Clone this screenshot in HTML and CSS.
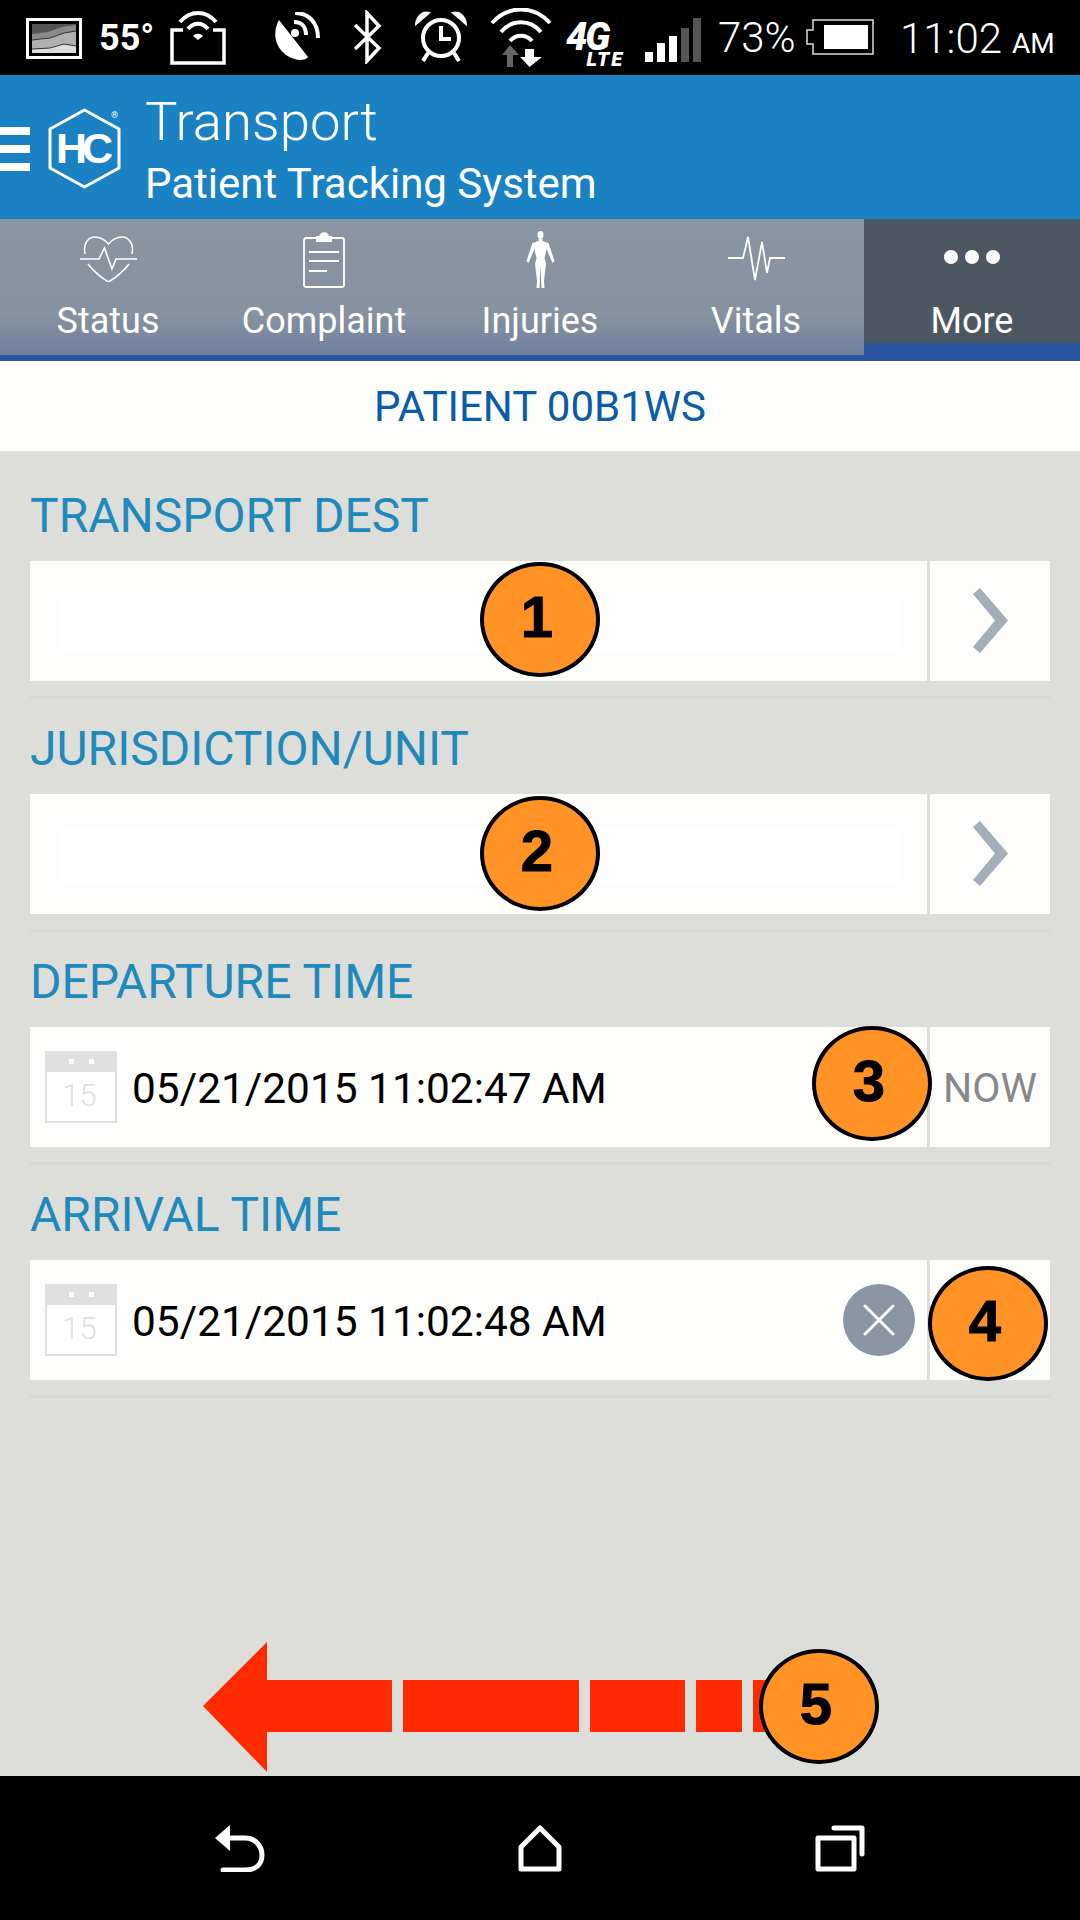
FILE: index.html
```html
<!DOCTYPE html>
<html lang="en">
<head>
  <meta charset="UTF-8" />
  <meta name="viewport" content="width=device-width, initial-scale=1" />
  <title>Transport - Patient Tracking System</title>
  <link rel="stylesheet" href="styles.css">
</head>
<body>
<div class="screen">

  <!-- status bar -->
  <div class="status-bar">
    <svg class="st-widget" width="56" height="41" viewBox="0 0 56 41">
      <rect x="1.5" y="1.5" width="53" height="38" fill="#000" stroke="#fff" stroke-width="3"/>
      <rect x="6" y="6" width="44" height="29" fill="#555"/>
      <path d="M6 16 L22 14 L36 9 L50 7 V35 H6Z" fill="#8a8a8a"/>
      <path d="M6 22 L24 20 L38 15 L50 13 V35 H6Z" fill="#b0b0b0"/>
      <path d="M6 31 L24 30 L38 26 L50 28 V35 H6Z" fill="#ddd"/>
      <path d="M6 22 L24 20 L38 15 L50 13 M6 31 L24 30 L38 26 L50 28" fill="none" stroke="#333"/>
    </svg>
    <span class="st-temp">55°</span>
    <svg class="st-hotspot" width="58" height="55" viewBox="0 0 58 55">
      <path d="M14 20 H3 V53 H55 V20 H44" fill="none" stroke="#fff" stroke-width="3.5"/>
      <path d="M11 12 C21 0 37 0 47 12" fill="none" stroke="#fff" stroke-width="4"/>
      <path d="M19 19 C25 12 33 12 39 19" fill="none" stroke="#fff" stroke-width="4"/>
      <path d="M24 26 C27 23 31 23 34 26 L29 30Z" fill="#fff"/>
    </svg>
    <svg class="st-dish" width="46" height="48" viewBox="0 0 46 48">
      <path d="M5 8 C-5 26 6 46 26 48 C30 48 33 47 34 45Z" fill="#fff"/>
      <circle cx="21" cy="21" r="4" fill="#fff"/>
      <path d="M20 10 C28 10 32 15 32 23" fill="none" stroke="#fff" stroke-width="4"/>
      <path d="M21 1 C35 1 44 11 44 26" fill="none" stroke="#fff" stroke-width="4"/>
    </svg>
    <svg class="st-bt" width="29" height="54" viewBox="0 0 29 54">
      <path d="M2 15 L26 38 L14 51 V3 L26 16 L2 39" fill="none" stroke="#fff" stroke-width="3.5"/>
    </svg>
    <svg class="st-alarm" width="52" height="51" viewBox="0 0 52 51">
      <circle cx="26" cy="27" r="18" fill="none" stroke="#fff" stroke-width="4"/>
      <path d="M26 15 V28 H36" fill="none" stroke="#fff" stroke-width="4"/>
      <path d="M1 13 C2 5 8 0 14 2Z M51 13 C50 5 44 0 38 2Z" fill="#fff" stroke="#fff" stroke-width="2"/>
      <path d="M13 42 L8 50 M39 42 L44 50" stroke="#fff" stroke-width="4"/>
    </svg>
    <svg class="st-wifi" width="62" height="59" viewBox="0 0 62 59">
      <path d="M2 15 C18 -3 44 -3 60 15" fill="none" stroke="#fff" stroke-width="4"/>
      <path d="M11 24 C22 11 40 11 51 24" fill="none" stroke="#fff" stroke-width="4"/>
      <path d="M20 33 C26 26 36 26 42 33" fill="none" stroke="#fff" stroke-width="4"/>
      <path d="M12 47 L20 37 L29 47 H23 V59 H17 V47Z" fill="#666"/>
      <path d="M33 42 H42 V50 H50 L37.500 60 L32 54 L28 50 H33Z" fill="#fff" transform="translate(2 -1)"/>
    </svg>
    <div class="st-lte">
      <span class="st-lte-4g">4G</span>
      <span class="st-lte-sub">LTE</span>
    </div>
    <svg class="st-signal" width="56" height="44" viewBox="0 0 56 44">
      <rect x="0" y="34" width="8" height="10" fill="#fff"/>
      <rect x="12" y="25" width="8" height="19" fill="#fff"/>
      <rect x="24" y="18" width="8" height="26" fill="#fff"/>
      <rect x="36" y="10" width="8" height="34" fill="#555"/>
      <rect x="48" y="0" width="8" height="44" fill="#555"/>
    </svg>
    <span class="st-batt-pct">73%</span>
    <svg class="st-battery" width="68" height="36" viewBox="0 0 68 36">
      <path d="M7 1 H67 V35 H7 V25 H1 V11 H7Z" fill="none" stroke="#ddd" stroke-width="1.500"/>
      <rect x="18" y="6" width="44" height="24" fill="#fff"/>
    </svg>
    <span class="st-time">11:02<small>AM</small></span>
  </div>

  <!-- app header -->
  <header class="app-header">
    <div class="menu-bars"><i></i><i></i><i></i></div>
    <div class="logo">
      <svg width="75" height="81" viewBox="0 0 75 81">
        <path d="M37.500 2 L72 21 V60 L37.500 79 L3 60 V21Z" fill="none" stroke="#fff" stroke-width="3" stroke-linejoin="round"/>
      </svg>
      <span class="logo-text">HC</span>
      <span class="logo-reg">®</span>
    </div>
    <div class="titles">
      <div class="title">Transport</div>
      <div class="subtitle">Patient Tracking System</div>
    </div>
  </header>

  <!-- tabs -->
  <nav class="tabs">
    <div class="tab">
      <div class="tab-icon">
        <svg width="57" height="46" viewBox="0 0 57 46" fill="none" stroke="#fff" stroke-width="1.600">
          <path d="M5 18 C3 8 8 1 15 1 C21 1 25 4 28.500 8 C32 4 36 1 42 1 C49 1 54 8 52 18"/>
          <path d="M0 23 H19 L24.500 12 L32 33 L36 23 H57"/>
          <path d="M8 28 C14 36 22 42 28.500 46 C35 42 43 36 49 28"/>
        </svg>
      </div>
      <span>Status</span>
    </div>
    <div class="tab">
      <div class="tab-icon">
        <svg width="42" height="57" viewBox="0 0 42 57" fill="none" stroke="#fff" stroke-width="1.800">
          <rect x="1" y="7" width="40" height="49" rx="2"/>
          <path d="M14 10 V6 H17 C17 1 25 1 25 6 H28 V10Z" fill="#fff"/>
          <path d="M6 21 H36 M6 30 H36 M6 40 H24" stroke-width="2"/>
        </svg>
      </div>
      <span>Complaint</span>
    </div>
    <div class="tab">
      <div class="tab-icon">
        <svg width="29" height="57" viewBox="0 0 29 57">
          <ellipse cx="14.500" cy="4" rx="3" ry="4" fill="#fff"/>
          <path d="M12.500 8 H16.500 V10 L22.500 12 L28.500 30 L26.500 32 L20.500 18 L19.500 23 L18.500 27 L20 33 L18 50 L18.500 57 H15.500 L14.500 34 L13.500 57 H10.500 L11 50 L9 33 L10.500 27 L9.500 23 L8.500 18 L2.500 32 L0.500 30 L6.500 12 L12.500 10Z" fill="#fff"/>
        </svg>
      </div>
      <span>Injuries</span>
    </div>
    <div class="tab">
      <div class="tab-icon">
        <svg width="57" height="46" viewBox="0 0 57 46" fill="none" stroke="#fff" stroke-width="1.800">
          <path d="M0 22 H15 L20 1 L27 44 L34 6 L39 37 L42 22 H57"/>
        </svg>
      </div>
      <span>Vitals</span>
    </div>
    <div class="tab tab-active">
      <div class="tab-icon">
        <div class="more-dots"><i></i><i></i><i></i></div>
      </div>
      <span>More</span>
    </div>
  </nav>

  <div class="patient-bar">PATIENT 00B1WS</div>

  <main class="content">
    <section class="group">
      <div class="group-label">TRANSPORT DEST</div>
      <div class="field">
        <div class="field-main"><div class="field-input"></div></div>
        <div class="field-side">
          <svg width="35" height="65" viewBox="0 0 35 65"><path d="M7 0 L35 32.500 L7 65 L0 59 L22 32.500 L0 6Z" fill="#a5adb9"/></svg>
        </div>
      </div>
    </section>

    <section class="group">
      <div class="group-label">JURISDICTION/UNIT</div>
      <div class="field">
        <div class="field-main"><div class="field-input"></div></div>
        <div class="field-side">
          <svg width="35" height="65" viewBox="0 0 35 65"><path d="M7 0 L35 32.500 L7 65 L0 59 L22 32.500 L0 6Z" fill="#a5adb9"/></svg>
        </div>
      </div>
    </section>

    <section class="group">
      <div class="group-label">DEPARTURE TIME</div>
      <div class="field">
        <div class="field-main">
          <div class="cal-icon"><div class="cal-top"><i></i><i></i></div><div class="cal-num">15</div></div>
          <span class="field-value">05/21/2015 11:02:47 AM</span>
        </div>
        <div class="field-side now-btn">NOW</div>
      </div>
    </section>

    <section class="group">
      <div class="group-label">ARRIVAL TIME</div>
      <div class="field">
        <div class="field-main">
          <div class="cal-icon"><div class="cal-top"><i></i><i></i></div><div class="cal-num">15</div></div>
          <span class="field-value">05/21/2015 11:02:48 AM</span>
          <div class="clear-btn">
            <svg width="32" height="32" viewBox="0 0 32 32"><path d="M2 2 L30 30 M30 2 L2 30" stroke="#fff" stroke-width="3" stroke-linecap="round"/></svg>
          </div>
        </div>
        <div class="field-side"></div>
      </div>
    </section>
  </main>

  <!-- android nav -->
  <div class="nav-bar">
    <svg width="50" height="47" viewBox="0 0 50 47" fill="none">
      <path d="M0 13 L15 0 V26Z" fill="#fff"/>
      <path d="M12 13 H30 C41 13 47 22 47 30 C47 39 41 45 30 45 H8" stroke="#fff" stroke-width="5" stroke-linecap="round"/>
    </svg>
    <svg width="44" height="47" viewBox="0 0 44 47" fill="none">
      <path d="M22 3 L41 22 V44 H3 V22Z" stroke="#fff" stroke-width="5" stroke-linejoin="round"/>
    </svg>
    <svg width="50" height="47" viewBox="0 0 50 47" fill="none">
      <rect x="3" y="13" width="36" height="31" stroke="#fff" stroke-width="5" stroke-linejoin="round"/>
      <path d="M19 3 H47 V29" stroke="#fff" stroke-width="5" stroke-linecap="round" stroke-linejoin="round"/>
    </svg>
  </div>

  <!-- annotations drawn over the screen -->
  <svg class="red-arrow" width="570" height="130" viewBox="0 0 570 130">
    <path d="M0 64 L64 0 V38 H189 V90 H64 V130Z" fill="#ff2a00"/>
    <rect x="200" y="38" width="176" height="52" fill="#ff2a00"/>
    <rect x="387" y="38" width="95" height="52" fill="#ff2a00"/>
    <rect x="493" y="38" width="46" height="52" fill="#ff2a00"/>
    <rect x="550" y="38" width="20" height="52" fill="#ff2a00"/>
  </svg>
  <div class="badge badge-1">1</div>
  <div class="badge badge-2">2</div>
  <div class="badge badge-3">3</div>
  <div class="badge badge-4">4</div>
  <div class="badge badge-5">5</div>

</div>
</body>
</html>
```

FILE: styles.css
```css
* {
  box-sizing: border-box;
}
body {
  margin: 0;
  font-family: Roboto, "Liberation Sans", sans-serif;
  background: #000;
}
.screen {
  position: relative;
  width: 1080px;
  height: 1920px;
  display: flex;
  flex-direction: column;
  overflow: hidden;
}

/* status bar */
.status-bar {
  height: 75px;
  background: #000;
  color: #fff;
  display: flex;
  align-items: center;
  flex-shrink: 0;
}
.st-widget { margin-left: 26px; margin-top: 2px; }
.st-temp { margin-left: 17px; font-size: 36px; font-weight: 700; width: 53px; white-space: nowrap; }
.st-hotspot { margin-left: 17px; margin-top: 0; }
.st-dish { margin-left: 47px; margin-top: -3px; }
.st-bt { margin-left: 33px; margin-top: -1px; }
.st-alarm { margin-left: 33px; margin-top: -2px; }
.st-wifi { margin-left: 23px; }
.st-lte {
  margin-left: 14px;
  width: 58px;
  height: 44px;
  margin-top: 15px;
  display: flex;
  flex-direction: column;
  font-weight: 900;
  font-style: italic;
  line-height: 1;
}
.st-lte-4g { font-size: 38px; letter-spacing: -2px; line-height: 29px; }
.st-lte-sub { font-size: 20px; line-height: 15px; text-align: right; letter-spacing: 2px; }
.st-signal { margin-left: 21px; margin-top: 5px; }
.st-batt-pct { margin-left: 17px; width: 77px; font-size: 42px; font-weight: 300; white-space: nowrap; }
.st-battery { margin-left: 11px; margin-top: -1px; }
.st-time { margin-left: 26px; font-size: 42px; font-weight: 300; margin-top: 2px; white-space: nowrap; }
.st-time small { font-size: 28px; font-weight: 400; margin-left: 10px; }

/* app header */
.app-header {
  height: 144px;
  background: #1a82c3;
  color: #fff;
  display: flex;
  align-items: center;
  flex-shrink: 0;
}
.menu-bars {
  width: 30px;
  display: flex;
  flex-direction: column;
  gap: 10px;
  margin-top: 4px;
}
.menu-bars i {
  display: block;
  height: 8px;
  background: #fff;
}
.logo {
  position: relative;
  width: 75px;
  height: 81px;
  margin-left: 17px;
  margin-top: 2px;
}
.logo svg { display: block; }
.logo-text {
  position: absolute;
  left: 9px;
  top: 18px;
  font-family: "Liberation Sans", sans-serif;
  font-size: 43px;
  font-weight: 700;
  letter-spacing: -5px;
  line-height: 44px;
}
.logo-reg {
  position: absolute;
  left: 64px;
  top: 2px;
  font-size: 9px;
}
.titles {
  margin-left: 23px;
  margin-top: 8px;
}
.title {
  font-size: 54.500px;
  font-weight: 300;
  line-height: 66px;
}
.subtitle {
  font-size: 42px;
  font-weight: 400;
  line-height: 60px;
}

/* tabs */
.tabs {
  height: 142px;
  display: grid;
  grid-template-columns: repeat(5, 216px);
  background: #2a55a0;
  padding-bottom: 6px;
  flex-shrink: 0;
}
.tab {
  display: flex;
  flex-direction: column;
  align-items: center;
  color: #fff;
  font-size: 36px;
  background: linear-gradient(#8995a3 0%, #8592a1 70%, #6f809b 100%);
}
.tab-icon {
  height: 71px;
  padding-top: 9px;
  display: flex;
  align-items: center;
  justify-content: center;
}
.tab span {
  line-height: 44px;
  margin-top: 9px;
}
.tab-active {
  background: #4d5761;
  height: 124px;
}
.more-dots {
  display: flex;
  gap: 7px;
  margin-top: -4px;
}
.more-dots i {
  display: block;
  width: 14px;
  height: 14px;
  border-radius: 50%;
  background: #fff;
}

.patient-bar {
  height: 90px;
  background: #fdfdfb;
  color: #0a5ba8;
  font-size: 42px;
  display: flex;
  align-items: center;
  justify-content: center;
  flex-shrink: 0;
}

/* form */
.content {
  flex: 1;
  background: #dddeda;
  padding: 15px 30px 0;
}
.group {
  height: 233px;
  border-bottom: 3px solid #d6d7d6;
}
.group-label {
  height: 95px;
  display: flex;
  align-items: center;
  color: #1e8abb;
  font-size: 48px;
  padding-top: 4px;
}
.field {
  height: 120px;
  display: flex;
  background: #fdfdfb;
}
.field-main {
  flex: 1;
  display: flex;
  align-items: center;
  padding-left: 15px;
}
.field-input {
  width: 844px;
  height: 57px;
  margin-left: 13px;
  margin-top: 2px;
  background: #fff;
}
.field-side {
  width: 123px;
  border-left: 3px solid #dddeda;
  display: flex;
  align-items: center;
  justify-content: center;
}
.field-side svg {
  margin-top: -1px;
}
.now-btn {
  color: #888;
  font-size: 41px;
  padding-top: 2px;
}
.cal-icon {
  width: 72px;
  height: 72px;
  border: 2px solid #dfe0df;
  background: #fff;
  display: flex;
  flex-direction: column;
  flex-shrink: 0;
}
.cal-top {
  height: 19px;
  background: #dfe0df;
  display: flex;
  justify-content: center;
  gap: 15px;
  padding-top: 6px;
}
.cal-top i {
  display: block;
  width: 5px;
  height: 5px;
  background: #fff;
}
.cal-num {
  flex: 1;
  color: #e0e0e0;
  font-size: 31px;
  text-align: center;
  line-height: 47px;
  font-weight: 300;
  padding-right: 3px;
}
.field-value {
  margin-left: 15px;
  margin-top: 2px;
  font-size: 42.400px;
  color: #000;
}
.clear-btn {
  margin-left: auto;
  margin-right: 12px;
  width: 72px;
  height: 72px;
  border-radius: 50%;
  background: #8a95a3;
  display: flex;
  align-items: center;
  justify-content: center;
}

/* android nav */
.nav-bar {
  height: 144px;
  background: #000;
  flex-shrink: 0;
  display: grid;
  grid-template-columns: repeat(3, 300px);
  padding: 0 90px;
  justify-items: center;
  align-items: center;
}

/* annotations */
.red-arrow {
  position: absolute;
  left: 203px;
  top: 1642px;
}
.badge {
  position: absolute;
  width: 120px;
  height: 115px;
  border: 4px solid #000;
  border-radius: 50%;
  background: #ff9326;
  color: #000;
  font-family: "Liberation Sans", sans-serif;
  font-size: 58px;
  font-weight: 700;
  -webkit-text-stroke: 1px #000;
  display: flex;
  align-items: center;
  justify-content: center;
  padding: 0 6px 7px 0;
}
.badge-1 { left: 480px; top: 562px; }
.badge-2 { left: 480px; top: 796px; }
.badge-3 { left: 812px; top: 1026px; }
.badge-4 { left: 928px; top: 1266px; }
.badge-5 { left: 759px; top: 1649px; }
```
